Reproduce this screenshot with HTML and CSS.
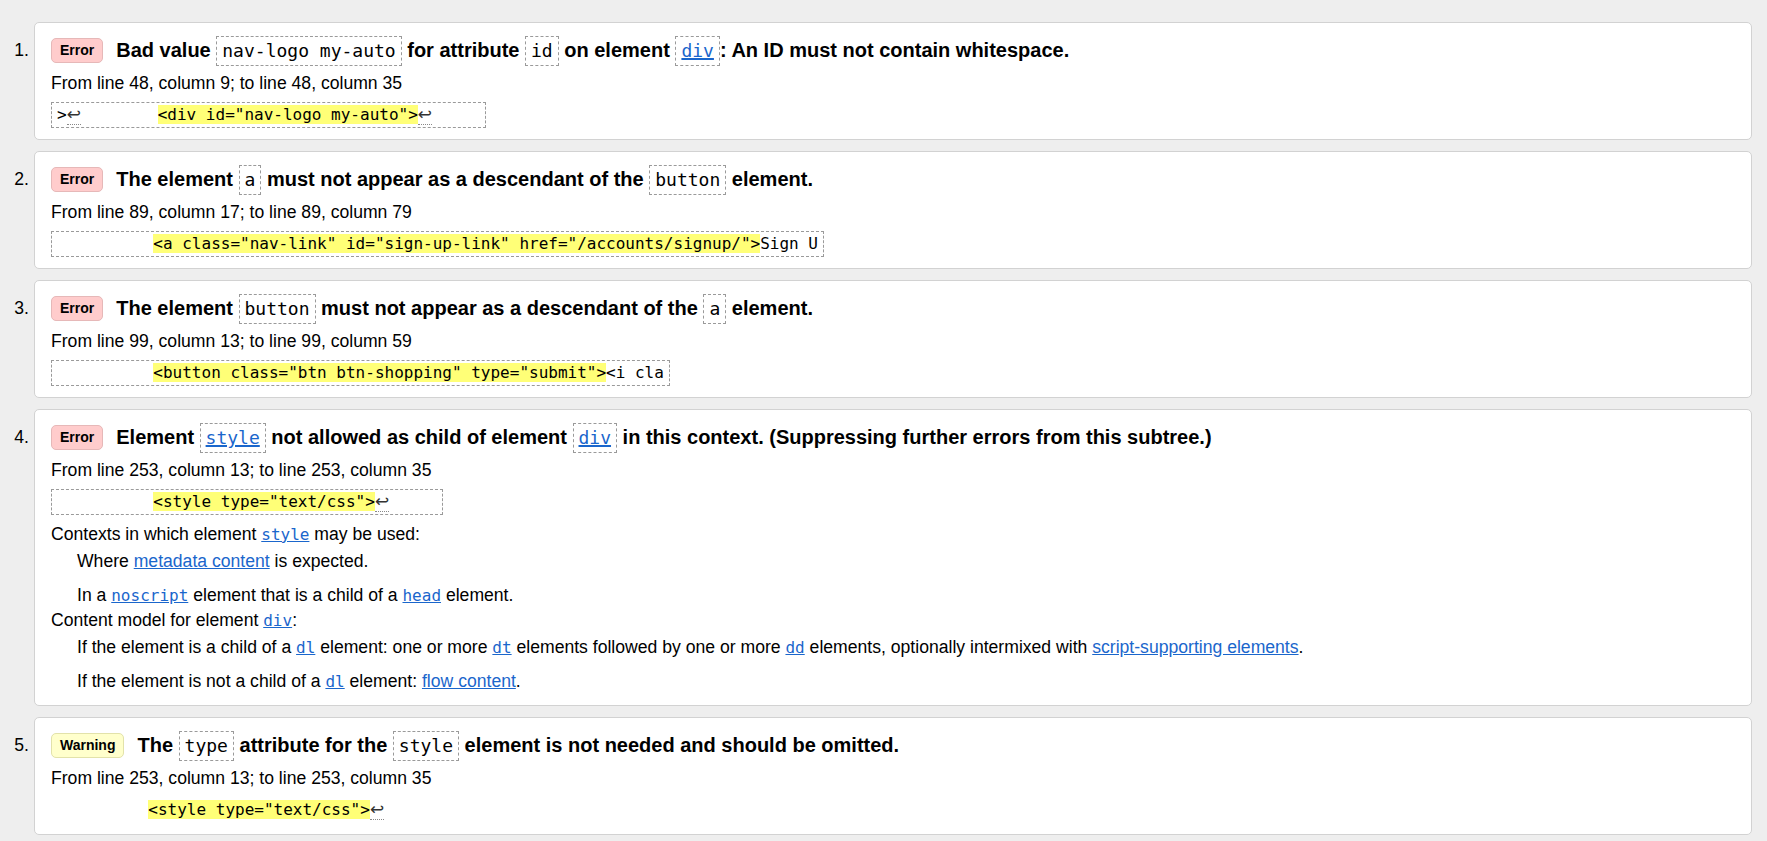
FILE: index.html
```html
<!DOCTYPE html>
<html lang="en">
<head>
<meta charset="utf-8">
<title>Validation messages</title>
<link rel="stylesheet" href="styles.css">
</head>
<body>
<ol class="msgs">
  <li class="msg">
    <span class="num">1.</span>
    <div class="card">
      <p class="head"><span class="badge err">Error</span>Bad value <code class="c">nav-logo my-auto</code> for attribute <code class="c">id</code> on element <a class="c link" href="#">div</a>: An ID must not contain whitespace.</p>
      <p class="loc">From line 48, column 9; to line 48, column 35</p>
      <div class="ext"><code class="box">&gt;<span class="lf">↩</span>        <b class="hl">&lt;div id="nav-logo my-auto"&gt;</b><span class="lf">↩</span>     </code></div>
    </div>
  </li>
  <li class="msg">
    <span class="num">2.</span>
    <div class="card">
      <p class="head"><span class="badge err">Error</span>The element <code class="c">a</code> must not appear as a descendant of the <code class="c">button</code> element.</p>
      <p class="loc">From line 89, column 17; to line 89, column 79</p>
      <div class="ext"><code class="box">          <b class="hl">&lt;a class="nav-link" id="sign-up-link" href="/accounts/signup/"&gt;</b>Sign U</code></div>
    </div>
  </li>
  <li class="msg">
    <span class="num">3.</span>
    <div class="card">
      <p class="head"><span class="badge err">Error</span>The element <code class="c">button</code> must not appear as a descendant of the <code class="c">a</code> element.</p>
      <p class="loc">From line 99, column 13; to line 99, column 59</p>
      <div class="ext"><code class="box">          <b class="hl">&lt;button class="btn btn-shopping" type="submit"&gt;</b>&lt;i cla</code></div>
    </div>
  </li>
  <li class="msg">
    <span class="num">4.</span>
    <div class="card">
      <p class="head"><span class="badge err">Error</span>Element <a class="c link" href="#">style</a> not allowed as child of element <a class="c link" href="#">div</a> in this context. (Suppressing further errors from this subtree.)</p>
      <p class="loc">From line 253, column 13; to line 253, column 35</p>
      <div class="ext"><code class="box">          <b class="hl">&lt;style type="text/css"&gt;</b><span class="lf">↩</span>     </code></div>
      <dl class="ctx">
        <dt>Contexts in which element <a class="m" href="#">style</a> may be used:</dt>
        <dd class="first">Where <a href="#">metadata content</a> is expected.</dd>
        <dd>In a <a class="m" href="#">noscript</a> element that is a child of a <a class="m" href="#">head</a> element.</dd>
        <dt>Content model for element <a class="m" href="#">div</a>:</dt>
        <dd class="first">If the element is a child of a <a class="m" href="#">dl</a> element: one or more <a class="m" href="#">dt</a> elements followed by one or more <a class="m" href="#">dd</a> elements, optionally intermixed with <a href="#">script-supporting elements</a>.</dd>
        <dd>If the element is not a child of a <a class="m" href="#">dl</a> element: <a href="#">flow content</a>.</dd>
      </dl>
    </div>
  </li>
  <li class="msg">
    <span class="num">5.</span>
    <div class="card">
      <p class="head"><span class="badge warn">Warning</span>The <code class="c">type</code> attribute for the <code class="c">style</code> element is not needed and should be omitted.</p>
      <p class="loc">From line 253, column 13; to line 253, column 35</p>
      <div class="ext"><code class="box plain">          <b class="hl">&lt;style type="text/css"&gt;</b><span class="lf">↩</span></code></div>
    </div>
  </li>
</ol>
</body>
</html>
```

FILE: styles.css
```css
html, body {
  margin: 0;
  padding: 0;
}

body {
  background: #eeeeee;
  color: #000;
  font-family: "Liberation Sans", Arial, sans-serif;
  font-size: 17.6px;
  overflow: hidden;
}

.msgs {
  list-style: none;
  margin: 0;
  padding: 22px 15px 0 0;
  display: flex;
  flex-direction: column;
  gap: 11px;
}

.msg {
  display: flex;
  align-items: flex-start;
}

.num {
  flex: none;
  width: 29px;
  margin: 13px 5px 0 0;
  text-align: right;
  line-height: 30px;
}

.card {
  flex: 1;
  background: #fff;
  border: 1px solid #d2d2d2;
  border-radius: 5px;
  padding: 12px 16px 11px;
}

.head {
  margin: 0;
  height: 30px;
  line-height: 30px;
  font-size: 20px;
  font-weight: bold;
  white-space: nowrap;
}

.badge {
  display: inline-block;
  position: relative;
  top: -1px;
  vertical-align: middle;
  font-size: 14px;
  line-height: 23px;
  padding: 0 8px;
  border-radius: 5px;
  margin-right: 13px;
}

.err {
  background: #ffcccc;
  border: 1px solid #e6b8b8;
}

.warn {
  background: #ffffcc;
  border: 1px solid #e2e2aa;
}

.c {
  display: inline-block;
  font-family: "DejaVu Sans Mono", monospace;
  font-weight: normal;
  font-size: 18px;
  line-height: 22px;
  padding: 3px 5px;
  border: 1px dashed #9a9a9a;
  color: #000;
  text-decoration: none;
}

.c.link {
  color: #1a66cc;
  text-decoration: underline;
  text-decoration-thickness: 2px;
}

.loc {
  margin: 7px 0 0;
  line-height: 22px;
}

.ext {
  margin-top: 8px;
  height: 26px;
}

.box {
  display: inline-block;
  vertical-align: top;
  font-family: "DejaVu Sans Mono", monospace;
  font-size: 16px;
  line-height: 20px;
  padding: 2px 5px;
  border: 1px dashed #9a9a9a;
  white-space: pre;
}

.box.plain {
  border-color: transparent;
  padding-left: 0;
}

.hl {
  background: #ffff77;
  font-weight: normal;
}

.lf {
  display: inline-block;
  vertical-align: top;
  width: 14px;
  height: 20px;
  box-sizing: border-box;
  font-family: "DejaVu Sans", sans-serif;
  font-size: 17px;
  line-height: 19px;
  border-bottom: 1px dotted #888;
  color: #333;
  overflow: hidden;
}

.ctx {
  margin: 7px 0 0;
  line-height: 25px;
}

.ctx dt {
  margin: 0;
}

.ctx dd {
  margin: 2px 0 0 26px;
}

.ctx dd.first {
  margin-bottom: 9px;
}

.ctx a {
  color: #1a66cc;
  text-decoration: underline;
}

.ctx a.m {
  font-family: "DejaVu Sans Mono", monospace;
  font-size: 16px;
}
```
